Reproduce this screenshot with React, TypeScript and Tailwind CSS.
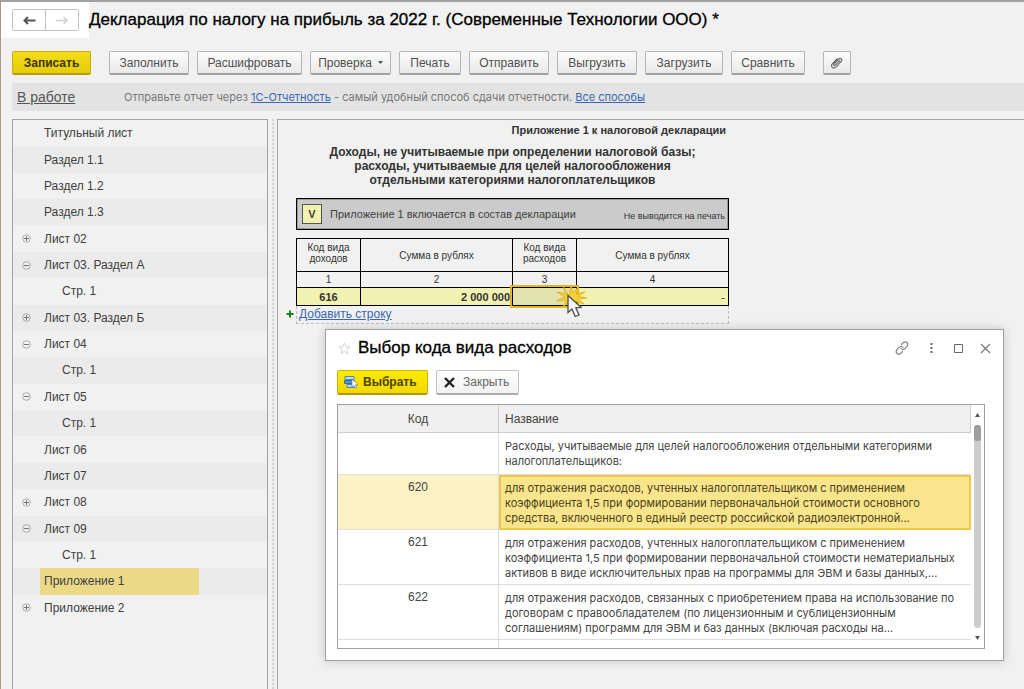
import React from 'react';

type TreeRow = { label: string; toggle?: 'plus' | 'minus'; child?: boolean; active?: boolean };

const tree: TreeRow[] = [
  { label: 'Титульный лист' },
  { label: 'Раздел 1.1' },
  { label: 'Раздел 1.2' },
  { label: 'Раздел 1.3' },
  { label: 'Лист 02', toggle: 'plus' },
  { label: 'Лист 03. Раздел А', toggle: 'minus' },
  { label: 'Стр. 1', child: true },
  { label: 'Лист 03. Раздел Б', toggle: 'plus' },
  { label: 'Лист 04', toggle: 'minus' },
  { label: 'Стр. 1', child: true },
  { label: 'Лист 05', toggle: 'minus' },
  { label: 'Стр. 1', child: true },
  { label: 'Лист 06' },
  { label: 'Лист 07' },
  { label: 'Лист 08', toggle: 'plus' },
  { label: 'Лист 09', toggle: 'minus' },
  { label: 'Стр. 1', child: true },
  { label: 'Приложение 1', active: true },
  { label: 'Приложение 2', toggle: 'plus' },
];

const actions = [
  { label: 'Заполнить', width: 'w-20' },
  { label: 'Расшифровать', width: 'w-[105px]' },
  { label: 'Проверка', width: 'w-[81px]', menu: true },
  { label: 'Печать', width: 'w-[62px]' },
  { label: 'Отправить', width: 'w-20' },
  { label: 'Выгрузить', width: 'w-20' },
  { label: 'Загрузить', width: 'w-[78px]' },
  { label: 'Сравнить', width: 'w-[74px]' },
];

const codes = [
  {
    code: '',
    height: 'h-[42px]',
    text: 'Расходы, учитываемые для целей налогообложения отдельными категориями\nналогоплательщиков:',
  },
  {
    code: '620',
    height: 'h-[55px]',
    selected: true,
    text: 'для отражения расходов, учтенных налогоплательщиком с применением\nкоэффициента 1,5 при формировании первоначальной стоимости основного\nсредства, включенного в единый реестр российской радиоэлектронной...',
  },
  {
    code: '621',
    height: 'h-[55px]',
    text: 'для отражения расходов, учтенных налогоплательщиком с применением\nкоэффициента 1,5 при формировании первоначальной стоимости нематериальных\nактивов в виде исключительных прав на программы для ЭВМ и базы данных,...',
  },
  {
    code: '622',
    height: 'h-[55px]',
    text: 'для отражения расходов, связанных с приобретением права на использование по\nдоговорам с правообладателем (по лицензионным и сублицензионным\nсоглашениям) программ для ЭВМ и баз данных (включая расходы на...',
  },
];

const buttonBase =
  'flex h-6 shrink-0 items-center justify-center rounded-[2px] border border-b-2 border-[#b5b5b5] border-b-[#a2a2a2] bg-linear-to-b from-[#fcfcfc] to-[#e9e9e9] text-xs text-[#505050]';

function Toggle({ kind }: { kind: 'plus' | 'minus' }) {
  return (
    <button type="button" aria-label={kind === 'plus' ? 'Развернуть' : 'Свернуть'}>
      <svg width="9" height="9" viewBox="0 0 9 9" fill="none" stroke="#9a9a9a">
        <circle cx="4.5" cy="4.5" r="3.8" strokeWidth="0.8" />
        <path d="M2 4.5h5" stroke="#777" />
        {kind === 'plus' && <path d="M4.5 2v5" stroke="#777" />}
      </svg>
    </button>
  );
}

function Header() {
  return (
    <header className="flex items-start">
      <div className="flex h-9 w-[88px] shrink-0 items-start bg-white pt-[7px] pl-[11px]">
        <button type="button" aria-label="Назад" className="flex h-[22px] w-[34px] items-center justify-center rounded-l-[2px] border border-[#c4c4c4]">
          <svg width="13" height="9" viewBox="0 0 13 9" fill="none" stroke="#555" strokeWidth="2">
            <path d="M1.5 4.5H12.500M5 1L1.500 4.500L5 8" />
          </svg>
        </button>
        <button type="button" aria-label="Вперед" className="flex h-[22px] w-[33px] items-center justify-center rounded-r-[2px] border border-l-0 border-[#c4c4c4]">
          <svg width="12" height="9" viewBox="0 0 12 9" fill="none" stroke="#cfcfcf" strokeWidth="1.400">
            <path d="M0 4.500H11M7.500 1L11 4.500L7.500 8" />
          </svg>
        </button>
      </div>
      <h1 className="pt-[7px] text-[17px] leading-[22px] text-black [-webkit-text-stroke:0.3px_black]">
        Декларация по налогу на прибыль за 2022 г. (Современные Технологии ООО) *
      </h1>
    </header>
  );
}

function Toolbar() {
  return (
    <div className="flex gap-2 px-[11px] pt-[13px]">
      <button type="button" className="mr-2.5 flex h-6 w-[79px] shrink-0 items-center justify-center rounded-[2px] border border-b-2 border-[#c8ac10] border-b-[#b79c0c] bg-linear-to-b from-[#f2dc1a] to-[#e6cc08] text-xs font-bold text-[#3d3500]">
        Записать
      </button>
      {actions.map((a) => (
        <button type="button" key={a.label} className={`${buttonBase} ${a.width}`}>
          {a.label}
          {a.menu && (
            <svg width="5" height="3" viewBox="0 0 5 3" className="ml-1.5" fill="#555">
              <path d="M0 0h5L2.500 3z" />
            </svg>
          )}
        </button>
      ))}
      <button type="button" aria-label="Вложения" className={`${buttonBase} ml-2.5 w-7`}>
        <svg width="14" height="14" viewBox="0 0 14 14" fill="none" stroke="#666" strokeWidth="1.100" strokeLinecap="round">
          <path d="M9.800 4.500L5.200 9.200c-.9.900-2.200-.3-1.300-1.300L8.700 3c1.700-1.700 4.200.600 2.600 2.400l-5.500 5.800c-2.400 2.300-5.700-.8-3.500-3.300L7 3" />
        </svg>
      </button>
    </div>
  );
}

function Tree() {
  return (
    <nav className="w-64 shrink-0 border border-b-0 border-[#a3a3a3] text-xs text-[#404040]">
      <ul className="grid min-h-[501px] auto-rows-fr">
        {tree.map((row, i) => (
          <li key={i} className="flex items-center even:bg-[#ebebeb]">
            <span className="flex w-[27px] shrink-0 items-center pl-[9px]">
              {row.toggle && <Toggle kind={row.toggle} />}
            </span>
            <a
              href="#"
              className={`flex items-center self-stretch ${row.child ? 'pl-[22px]' : 'pl-1'} ${row.active ? 'w-[159px] bg-[#ecd987]' : ''}`}
            >
              {row.label}
            </a>
          </li>
        ))}
      </ul>
    </nav>
  );
}

function ClickMark() {
  return (
    <svg className="pointer-events-none absolute -right-[11px] -top-1 z-10" width="32" height="38" viewBox="0 0 32 38">
      <path
        d="M14 12L16 1L18 9L24 2L21.500 10L30 8L23 12.500L32 14L23 15L29 20L20 17L18 24L15 17L8 23L11 16L1 17L10 13L2 8L11 10L8 2Z"
        fill="#f7cf3a"
        stroke="#e5ad0a"
        strokeWidth="0.800"
      />
      <path d="M13 11.500V28.500L17 25L20.200 32.500L24 31L20.800 23.800L26 23.300Z" fill="#f7f7f7" stroke="#4d4d4d" strokeWidth="1.300" />
    </svg>
  );
}

function Sheet() {
  const cell = 'border border-black font-normal';
  return (
    <section className="w-[433px] text-[#333]">
      <p className="pr-[3px] text-right text-[11px] leading-4 font-bold">Приложение 1 к налоговой декларации</p>
      <h2 className="pt-[7px] text-center text-xs leading-[14px] font-bold">
        Доходы, не учитываемые при определении налоговой базы;
        <br />
        расходы, учитываемые для целей налогообложения
        <br />
        отдельными категориями налогоплательщиков
      </h2>
      <div className="mt-[11px] flex h-8 items-center border border-black bg-[#cbcbcb] pr-[3px] pl-[5px] shadow-[inset_0_0_0_1px_#999]">
        <label className="flex items-center text-[11px] text-[#404040]">
          <span className="relative mr-2 flex h-5 w-5 items-center justify-center">
            <input type="checkbox" defaultChecked className="absolute inset-0 appearance-none border border-[#555] bg-[#f2f2b0]" />
            <span className="relative text-[11px] font-bold">V</span>
          </span>
          Приложение 1 включается в состав декларации
        </label>
        <span className="ml-auto pt-1.5 text-[9px]">Не выводится на печать</span>
      </div>
      <table className="mt-2 w-full table-fixed border-collapse text-center text-[10px]">
        <colgroup>
          <col className="w-16" />
          <col className="w-[152px]" />
          <col className="w-16" />
          <col />
        </colgroup>
        <thead>
          <tr className="h-[33px] leading-[11px]">
            <th className={`${cell} pb-1`}>Код вида доходов</th>
            <th className={cell}>Сумма в рублях</th>
            <th className={`${cell} pb-1`}>Код вида расходов</th>
            <th className={cell}>Сумма в рублях</th>
          </tr>
          <tr className="h-4 leading-3">
            <th className={cell}>1</th>
            <th className={cell}>2</th>
            <th className={cell}>3</th>
            <th className={cell}>4</th>
          </tr>
        </thead>
        <tbody>
          <tr className="h-[18px] bg-[#f1f1b2] text-[11px] leading-4 font-bold">
            <td className="border border-black">616</td>
            <td className="border border-black pr-0.5 text-right">2 000 000</td>
            <td className="relative border border-black bg-[#e2e2ae]">
              <span className="absolute -inset-[3px] border-2 border-[#e3b52c]" />
              <ClickMark />
            </td>
            <td className="border border-black pr-[3px] text-right font-normal">-</td>
          </tr>
        </tbody>
      </table>
      <div className="relative h-[18px] border border-t-0 border-dashed border-[#bdbdbd] pl-[2px] text-xs leading-4">
        <svg className="absolute top-1 -left-[11px]" width="8" height="8" viewBox="0 0 8 8" stroke="#118a11" strokeWidth="2">
          <path d="M4 0.500V7.500M0.500 4H7.500" />
        </svg>
        <a href="#" className="text-[#3a67b5] underline">Добавить строку</a>
      </div>
    </section>
  );
}

function CodeDialog() {
  return (
    <section
      role="dialog"
      aria-labelledby="dialog-title"
      className="absolute top-[209px] right-5 left-[47px] border border-[#a0a0a0] bg-white pr-[18px] pb-[11px] pl-[11px] shadow-[0_0_10px_rgba(0,0,0,0.18)]"
    >
      <div className="-mr-2 flex h-9 items-center">
        <button type="button" aria-label="В избранное" className="mr-[7px] ml-px">
          <svg width="13" height="13" viewBox="0 0 14 14" fill="none" stroke="#d2d2d2">
            <path d="M7 1l1.600 4.200 4.400.2-3.400 2.800 1.200 4.300L7 10.100l-3.800 2.400 1.200-4.300L1 5.400l4.400-.2z" />
          </svg>
        </button>
        <h2 id="dialog-title" className="flex-1 text-[17px] text-black [-webkit-text-stroke:0.3px_black]">
          Выбор кода вида расходов
        </h2>
        <div className="flex items-center gap-4 pr-0.5">
          <button type="button" aria-label="Ссылка">
            <svg width="16" height="16" viewBox="0 0 16 16" fill="none" stroke="#858585" strokeWidth="1.200" strokeLinecap="round">
              <path d="M7.500 4.500l1.700-1.800c2.700-2.400 6 .700 3.900 3.500l-2.500 2.600c-1.100 1-2.600.9-3.500-.2M8.500 11.500l-1.700 1.800c-2.700 2.400-6-.700-3.900-3.500l2.500-2.600c1.100-1 2.600-.9 3.500.2" />
            </svg>
          </button>
          <button type="button" aria-label="Ещё" className="px-1">
            <svg width="3" height="12" viewBox="0 0 3 12" fill="#666">
              <path d="M.5 1h2v2h-2zM.5 5h2v2h-2zM.5 9h2v2h-2z" />
            </svg>
          </button>
          <button type="button" aria-label="Развернуть">
            <svg width="11" height="11" viewBox="0 0 11 11" fill="none" stroke="#666">
              <path d="M1.500 1.500h8v8h-8z" />
            </svg>
          </button>
          <button type="button" aria-label="Закрыть окно">
            <svg width="11" height="11" viewBox="0 0 11 11" stroke="#777" strokeWidth="1.100">
              <path d="M1 1l9 9M10 1l-9 9" />
            </svg>
          </button>
        </div>
      </div>
      <div className="flex gap-2 pt-1">
        <button type="button" className="flex h-[25px] w-[91px] items-center gap-1 rounded-[2px] border border-b-2 border-[#cdb40a] border-b-[#b09a08] bg-linear-to-b from-[#ffeb00] to-[#f2d800] pl-1.5 text-xs font-bold text-[#4a4000]">
          <svg width="15" height="13" viewBox="0 0 15 13">
            <path d="M1 .5h9v3H1zM3 8.500h9v3H3z" fill="#bddcf2" stroke="#4d87b5" />
            <path d="M.5 4.500h10v3H.5z" fill="#4d93cc" stroke="#356f9f" />
            <path d="M8 3v8l2-1.600 1.300 2.800 1.400-.7-1.200-2.600 2.500-.300z" fill="#fff" stroke="#687e8c" strokeWidth=".7" />
          </svg>
          Выбрать
        </button>
        <button type="button" className="flex h-[25px] w-[83px] items-center gap-2 rounded-[2px] border border-b-2 border-[#c2c2c2] border-b-[#acacac] bg-linear-to-b from-white to-[#f2f2f2] pl-[7px] text-xs text-[#666]">
          <svg width="11" height="11" viewBox="0 0 11 11" stroke="#222" strokeWidth="2.400">
            <path d="M1 1l9 9M10 1l-9 9" />
          </svg>
          Закрыть
        </button>
      </div>
      <div className="mt-[9px] flex h-[245px] overflow-hidden border border-[#a0a0a0]">
        <div className="min-w-0 flex-1 overflow-hidden">
          <table className="w-full table-fixed border-separate border-spacing-0 text-xs text-[#444]">
            <colgroup>
              <col className="w-[161px]" />
              <col />
            </colgroup>
            <thead>
              <tr className="h-7 bg-[#f0f0f0]">
                <th className="border-r border-b border-[#cfcfcf] font-normal">Код</th>
                <th className="border-r border-b border-[#cfcfcf] pl-1.5 text-left font-normal">Название</th>
              </tr>
            </thead>
            <tbody className="leading-[15px]">
              {codes.map((row) => (
                <tr key={row.code} className={row.height}>
                  <td
                    className={`border-r border-b border-[#dedede] pt-[5px] text-center align-top ${row.selected ? 'bg-[#fdf2c6]' : ''}`}
                  >
                    {row.code}
                  </td>
                  <td
                    className={`align-top font-[Inter,'Liberation_Sans',sans-serif] text-[11px] leading-[15px] whitespace-pre ${row.selected ? 'border-2 border-[#edc842] bg-[#f9e58c] pt-1 pl-1 text-[#4c421a]' : 'border-b border-[#dedede] pt-1.5 pl-1.5'}`}
                  >
                    {row.text}
                  </td>
                </tr>
              ))}
              <tr className="h-2.5">
                <td className="border-r border-[#dedede]" />
                <td />
              </tr>
            </tbody>
          </table>
        </div>
        <div className="flex w-[13px] flex-col items-center py-2">
          <svg width="5" height="4" viewBox="0 0 5 4" fill="#555">
            <path d="M0 4h5L2.500 0z" />
          </svg>
          <div className="mt-2 mb-2 w-[7px] flex-1 rounded-full bg-[#cdcdcd]">
            <div className="h-4 rounded-[3px] bg-[#9e9e9e]" />
          </div>
          <svg width="5" height="4" viewBox="0 0 5 4" fill="#555">
            <path d="M0 0h5L2.500 4z" />
          </svg>
        </div>
      </div>
    </section>
  );
}

export default function App() {
  return (
    <div className="flex min-h-screen flex-col border-t-2 border-l border-t-[#a3a0a0] border-l-[#a89880] bg-[#f1f1f1] font-['Liberation_Sans',Arial,sans-serif]">
      <Header />
      <Toolbar />
      <div className="mt-2 ml-[11px] flex h-7 items-center bg-[#e3e3e3] pl-[5px] text-[#777]">
        <a href="#" className="w-[107px] text-sm text-[#555] underline">В работе</a>
        <p className="font-[Inter,'Liberation_Sans',sans-serif] text-[11px]">
          Отправьте отчет через <a href="#" className="text-[#3a67b5] underline">1С-Отчетность</a> - самый удобный способ сдачи отчетности.{' '}
          <a href="#" className="text-[#3a67b5] underline">Все способы</a>
        </p>
      </div>
      <div className="mt-2 ml-[11px] flex flex-1">
        <Tree />
        <div className="ml-1 w-[5px] shrink-0 border-l-2 border-dotted border-[#d2d2d2]" />
        <main className="relative min-w-0 flex-1 border-t border-l border-[#a3a3a3] pt-0.5 pl-[18px]">
          <Sheet />
          <CodeDialog />
        </main>
      </div>
    </div>
  );
}
